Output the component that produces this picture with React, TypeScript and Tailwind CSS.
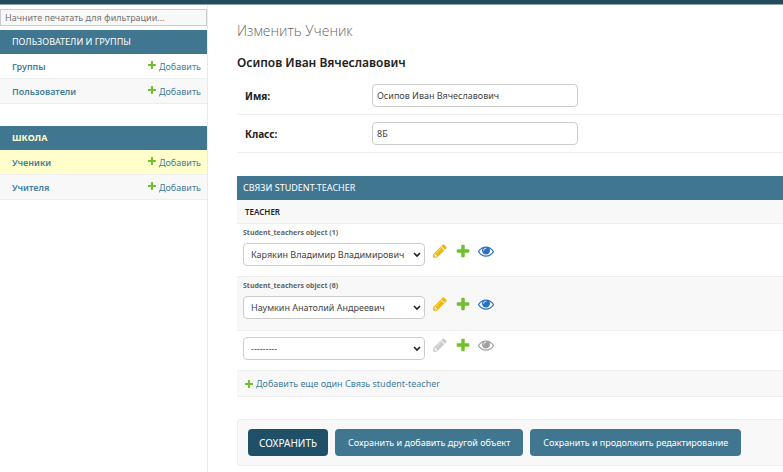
import React from "react";

const PENCIL =
  "M491 1536l91-91-235-235-91 91v107h128v128h107zm523-928q0-22-22-22-10 0-17 7l-542 542q-7 7-7 17 0 22 22 22 10 0 17-7l542-542q7-7 7-17zm-54-192l416 416-832 832h-416v-416zm683 96q0 53-37 90l-166 166-416-416 166-165q36-38 90-38 53 0 91 38l235 234q37 39 37 91z";
const PLUS =
  "M1600 796v192q0 40-28 68t-68 28h-416v416q0 40-28 68t-68 28h-192q-40 0-68-28t-28-68v-416h-416q-40 0-68-28t-28-68v-192q0-40 28-68t68-28h416v-416q0-40 28-68t68-28h192q40 0 68 28t28 68v416h416q40 0 68 28t28 68z";
const EYE =
  "M1664 960q-152-236-381-353 61 104 61 225 0 185-131.5 316.5t-316.5 131.5-316.5-131.5-131.5-316.5q0-121 61-225-229 117-381 353 133 205 333.5 326.5t434.5 121.5 434.5-121.5 333.5-326.5zm-720-384q0-20-14-34t-34-14q-125 0-214.5 89.5t-89.5 214.5q0 20 14 34t34 14 34-14 14-34q0-86 61-147t147-61q20 0 34-14t14-34zm848 384q0 34-20 69-140 230-376.5 368.5t-499.5 138.5-499.5-139-376.5-368q-20-35-20-69t20-69q140-229 376.5-368t499.5-139 499.5 139 376.5 368q20 35 20 69z";

function Icon({ path, className }: { path: string; className: string }) {
  return (
    <svg viewBox="0 0 1792 1792" fill="currentColor" aria-hidden="true" className={`shrink-0 ${className}`}>
      <path d={path} />
    </svg>
  );
}

type Model = { name: string; tone: string };

function AppModule({ title, current, models }: { title: string; current?: boolean; models: Model[] }) {
  return (
    <section>
      <h2 className={`flex h-6 items-center bg-[#417690] pl-3 ${current ? "font-bold text-[#ffffcc]" : "text-white"}`}>
        <a href="#app">{title}</a>
      </h2>
      <ul>
        {models.map((m) => (
          <li
            key={m.name}
            className={`flex h-[25px] items-center justify-between border-b border-[#eeeeee] pt-0.5 pl-3 pr-1.5 text-[#447e9b] ${m.tone}`}
          >
            <a href="#model" className="font-semibold">{m.name}</a>
            <a href="#add" className="flex gap-0.5">
              <Icon path={PLUS} className="size-2.5 text-[#70bf2b]" />
              Добавить
            </a>
          </li>
        ))}
      </ul>
    </section>
  );
}

function Field({ id, label, value }: { id: string; label: string; value: string }) {
  return (
    <div className="flex h-[38px] items-center border-b border-[#eeeeee] pl-2">
      <label htmlFor={id} className="w-[127px] text-[10px] font-bold text-[#222222]">{label}</label>
      <input
        id={id}
        defaultValue={value}
        className="h-[23px] w-[206px] rounded-sm border border-[#cccccc] bg-white px-1 text-[#444444]"
      />
    </div>
  );
}

function TeacherRow({ id, caption, value, tone }: { id: string; caption?: string; value?: string; tone: string }) {
  const chosen = value !== undefined;
  return (
    <div className={`border-b border-[#eeeeee] pl-1.5 ${tone}`}>
      {caption && (
        <p className="mb-1 text-[7px] leading-3 font-bold text-[#666666]">
          {caption}
        </p>
      )}
      <div className="flex">
        <div className="relative">
          <select
            id={id}
            aria-label="Teacher"
            defaultValue={value ?? "---------"}
            className="block h-[23px] w-[182px] appearance-none rounded-sm border border-[#cccccc] bg-white pl-[7px] pr-4 text-[#444444]"
          >
            <option>{value ?? "---------"}</option>
          </select>
          <svg viewBox="0 0 8 6" aria-hidden="true" className="pointer-events-none absolute top-[9px] right-1 h-1.5 w-2">
            <path d="M1 1l3 3 3-3" fill="none" stroke="#222" strokeWidth="1.6" />
          </svg>
        </div>
        <div className="flex items-start gap-[7px] pl-[7px]">
          <button type="button" aria-label="Изменить">
            <Icon path={PENCIL} className={`size-4 ${chosen ? "text-[#efb80b]" : "text-[#cccccc]"}`} />
          </button>
          <button type="button" aria-label="Добавить">
            <Icon path={PLUS} className="size-4 text-[#70bf2b]" />
          </button>
          <button type="button" aria-label="Просмотреть">
            <Icon path={EYE} className={`size-4 ${chosen ? "text-[#2b70bf]" : "text-[#a0a0a0]"}`} />
          </button>
        </div>
      </div>
    </div>
  );
}

export default function App() {
  return (
    <div className="bg-white font-['Noto_Sans',sans-serif] text-[9px] leading-[14px] text-[#333333]">
      <header className="h-[5px] border-b border-[#8aa5b2] bg-[#264b5d]" />
      <div className="flex">
        <nav className="min-h-[calc(100vh-5px)] w-[208px] shrink-0 border-r border-[#eaeaea] pt-1">
          <input
            aria-label="Фильтр"
            placeholder="Начните печатать для фильтрации..."
            className="mb-1 block h-[17px] w-full border border-[#cccccc] bg-[#f8f8f8] px-1 placeholder:text-[#757575]"
          />
          <AppModule
            title="ПОЛЬЗОВАТЕЛИ И ГРУППЫ"
            models={[
              { name: "Группы", tone: "bg-white" },
              { name: "Пользователи", tone: "bg-[#f8f8f8]" },
            ]}
          />
          <div className="h-[22px]" />
          <AppModule
            title="ШКОЛА"
            current
            models={[
              { name: "Ученики", tone: "bg-[#ffffcc]" },
              { name: "Учителя", tone: "bg-[#f8f8f8]" },
            ]}
          />
        </nav>

        <main className="min-w-0 flex-1 pt-4 pl-[29px]">
          <h1 className="font-['Open_Sans','Noto_Sans',sans-serif] text-sm leading-5 font-light text-[#666666]">
            Изменить Ученик
          </h1>
          <h2 className="mt-3 text-xs leading-5 font-semibold text-[#222222]">Осипов Иван Вячеславович</h2>

          <form onSubmit={(e) => e.preventDefault()}>
            <div className="mt-1">
              <Field id="name" label="Имя:" value="Осипов Иван Вячеславович" />
              <Field id="grade" label="Класс:" value="8Б" />
            </div>

            <section className="mt-[23px]">
              <h2 className="flex h-6 items-center bg-[#417690] pl-1.5 text-white">СВЯЗИ STUDENT-TEACHER</h2>
              <h3 className="flex h-6 items-center border-b border-[#eeeeee] bg-[#f8f8f8] pl-2 text-[8px] font-semibold text-[#222222]">
                TEACHER
              </h3>
              <TeacherRow id="t1" caption="Student_teachers object (1)" value="Карякин Владимир Владимирович" tone="bg-white pt-[3px] pb-2.5" />
              <TeacherRow id="t2" caption="Student_teachers object (6)" value="Наумкин Анатолий Андреевич" tone="bg-[#f8f8f8] pt-[3px] pb-[11px]" />
              <TeacherRow id="t3" tone="bg-white pt-1.5 pb-2.5" />
              <div className="flex h-[26px] items-center border-b border-[#eeeeee] bg-[#f8f8f8] pl-[7px]">
                <a href="#add-row" className="flex items-center gap-0.5 text-[#447e9b]">
                  <Icon path={PLUS} className="size-2.5 text-[#70bf2b]" />
                  Добавить еще один Связь student-teacher
                </a>
              </div>
            </section>

            <div className="mt-[22px] flex gap-[7px] rounded-l-sm border border-r-0 border-[#eeeeee] bg-[#f8f8f8] py-[9px] pl-2.5 text-white">
              <button type="submit" className="h-[27px] rounded-sm bg-[#205067] px-[11px] text-[10px]">СОХРАНИТЬ</button>
              <button type="submit" className="h-[27px] rounded-sm bg-[#417690] px-[13px]">Сохранить и добавить другой объект</button>
              <button type="submit" className="h-[27px] rounded-sm bg-[#417690] px-[13px]">Сохранить и продолжить редактирование</button>
            </div>
          </form>
        </main>
      </div>
    </div>
  );
}
